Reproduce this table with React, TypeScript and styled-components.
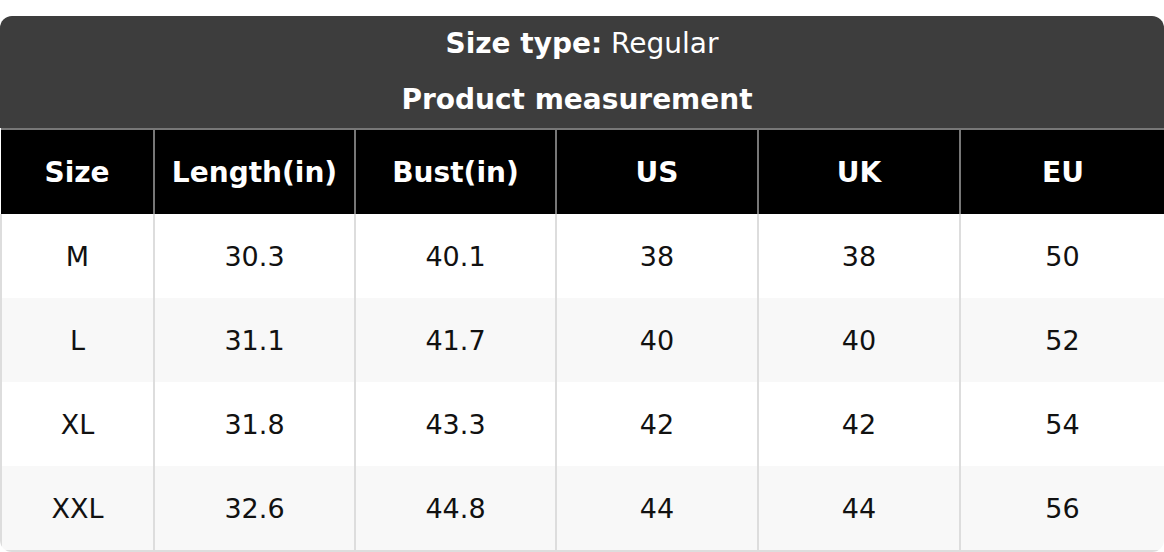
import React from "react";
import styled, { createGlobalStyle } from "styled-components";

const Global = createGlobalStyle`
  html, body { margin: 0; padding: 0; background: #ffffff; }
  body { font-family: "DejaVu Sans", Verdana, sans-serif; }
`;

const Page = styled.div`
  padding-top: 16px;
`;

const Card = styled.div`
  width: 1164px;
  border-radius: 12px;
  overflow: hidden;
  background: #ffffff;
  box-sizing: border-box;
`;

const Banner = styled.div`
  background: #3d3d3d;
  color: #ffffff;
  display: flex;
  flex-direction: column;
  align-items: center;
  height: 112px;
`;

const BannerLine = styled.div<{ $bold?: boolean }>`
  height: 56px;
  line-height: 56px;
  font-size: 28px;
  font-weight: ${(p) => (p.$bold ? 700 : 400)};
  padding-right: ${(p) => (p.$bold ? "10px" : "0")};
`;

const Strong = styled.span`
  font-weight: 700;
`;

const Table = styled.table`
  width: 1164px;
  border-collapse: collapse;
  table-layout: fixed;
  font-size: 27px;
`;

const Th = styled.th`
  background: #000000;
  color: #ffffff;
  font-weight: 700;
  font-size: 28px;
  height: 84px;
  padding: 0;
  text-align: center;
  border: 2px solid #777777;
  border-bottom: none;
  &:first-child { border-left: none; }
  &:last-child { border-right: none; }
`;

const Row = styled.tr<{ $alt: boolean }>`
  background: ${(p) => (p.$alt ? "#f8f8f8" : "#ffffff")};
`;

const Td = styled.td`
  height: 84px;
  padding: 0;
  text-align: center;
  color: #111111;
  border: 2px solid #dddddd;
  border-top: none;
  border-bottom: none;
`;

const LastRow = styled(Row)`
  td { border-bottom: 2px solid #dddddd; }
`;

const headers = ["Size", "Length(in)", "Bust(in)", "US", "UK", "EU"];
const rows = [
  ["M", "30.3", "40.1", "38", "38", "50"],
  ["L", "31.1", "41.7", "40", "40", "52"],
  ["XL", "31.8", "43.3", "42", "42", "54"],
  ["XXL", "32.6", "44.8", "44", "44", "56"],
];
const widths = [153, 201, 201, 202, 202, 205];

export default function App() {
  return (
    <Page>
      <Global />
      <Card>
        <Banner>
          <BannerLine>
            <Strong>Size type:</Strong> Regular
          </BannerLine>
          <BannerLine $bold>Product measurement</BannerLine>
        </Banner>
        <Table>
          <colgroup>
            {widths.map((w, i) => (
              <col key={i} style={{ width: w }} />
            ))}
          </colgroup>
          <thead>
            <tr>
              {headers.map((h) => (
                <Th key={h}>{h}</Th>
              ))}
            </tr>
          </thead>
          <tbody>
            {rows.map((r, i) => {
              const R = i === rows.length - 1 ? LastRow : Row;
              return (
                <R key={i} $alt={i % 2 === 1}>
                  {r.map((c, j) => (
                    <Td key={j}>{c}</Td>
                  ))}
                </R>
              );
            })}
          </tbody>
        </Table>
      </Card>
    </Page>
  );
}
